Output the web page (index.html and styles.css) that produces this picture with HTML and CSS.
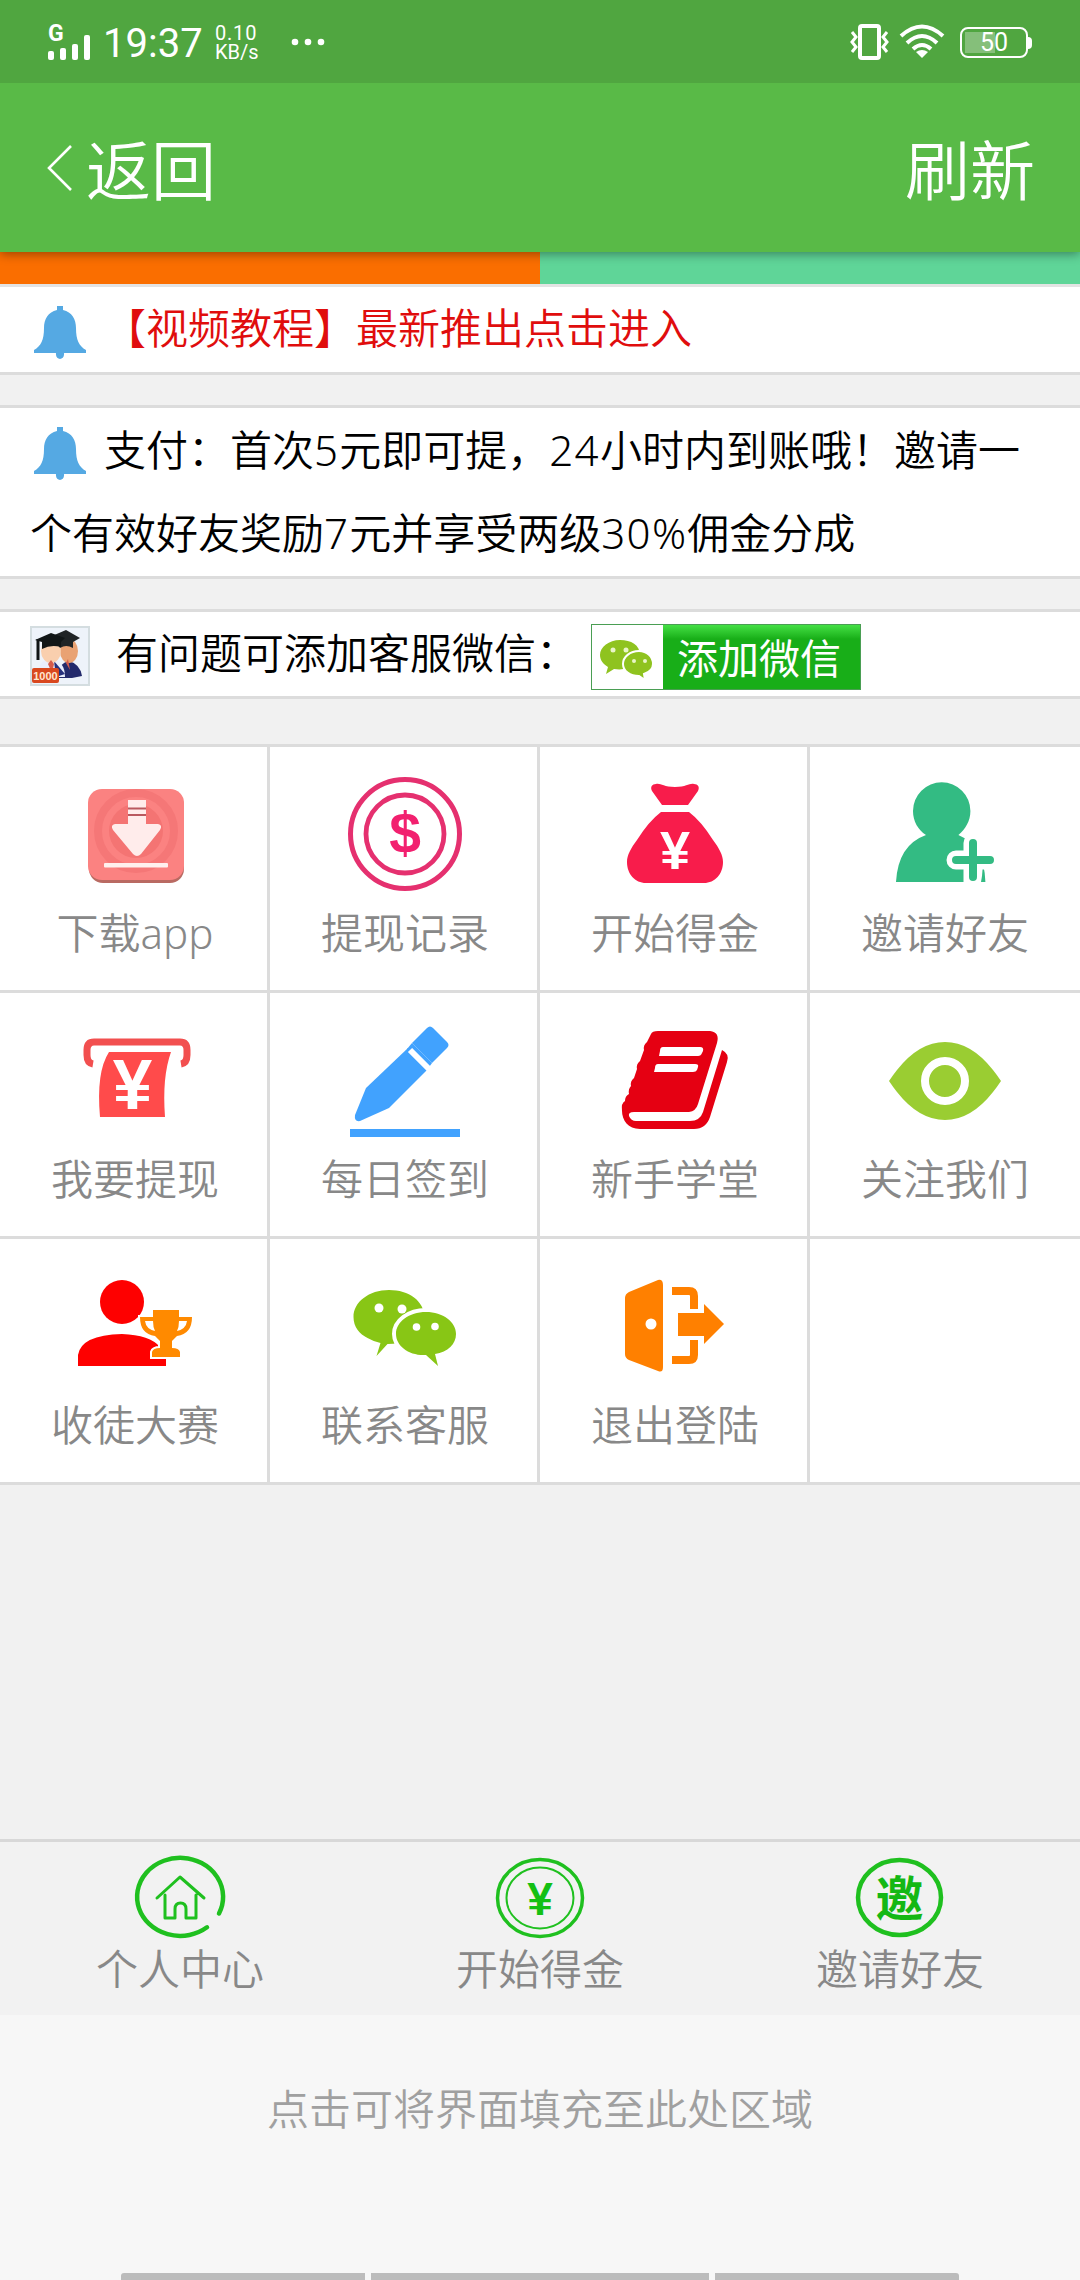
FILE: index.html
```html
<!DOCTYPE html>
<html lang="zh-CN">
<head>
    <meta charset="UTF-8">
    <meta name="viewport" content="width=device-width, initial-scale=1.0">
    <title>个人中心</title>
    <link rel="stylesheet" href="styles.css">
</head>
<body>
    <div class="status-bar">
        <div class="signal">
            <span class="network">G</span>
            <svg width="30" height="25" viewBox="0 0 30 25" fill="#fff">
                <rect x="0" y="16" width="6" height="9" rx="2"/>
                <rect x="12" y="13" width="6" height="12" rx="2"/>
                <rect x="24" y="9" width="6" height="16" rx="2"/>
                <rect x="36" y="0" width="6" height="25" rx="2"/>
            </svg>
        </div>
        <div class="time">19:37</div>
        <div class="speed"><span>0.10</span><span>KB/s</span></div>
        <svg class="dots" width="34" height="8" viewBox="0 0 34 8" fill="#fff">
            <circle cx="4" cy="4" r="3.3"/>
            <circle cx="17" cy="4" r="3.3"/>
            <circle cx="30" cy="4" r="3.3"/>
        </svg>
        <div class="status-right">
            <svg width="40" height="36" viewBox="0 0 40 36" fill="none" stroke="#fff">
                <rect x="10" y="2" width="19" height="32" rx="2" stroke-width="4"/>
                <path d="M2 8l4 5-4 5 4 5-4 5M37 8l-4 5 4 5-4 5 4 5" stroke-width="3"/>
            </svg>
            <svg width="46" height="36" viewBox="0 0 46 36" fill="none" stroke="#fff" stroke-width="4">
                <path d="M2 12Q23-7 44 12M8 19Q23 5 38 19M14 25Q23 17 32 25"/>
                <path d="M17 28q6-4 12 0l-6 6z" fill="#fff" stroke="none"/>
            </svg>
            <div class="battery"><span>50</span></div>
        </div>
    </div>

    <div class="header">
        <a class="back">
            <svg width="25" height="46" viewBox="0 0 25 46" fill="none" stroke="#fff" stroke-width="2.6">
                <path d="M24 1L2 23l22 22"/>
            </svg>
            <span>返回</span>
        </a>
        <a class="refresh">刷新</a>
    </div>
    <div class="tabs"><span></span><span></span></div>

    <div class="notice red">
        <svg class="bell" width="54" height="54" viewBox="0 0 54 54" fill="#55a9e3">
            <path d="M24 5V1h6v4c9 2 13 9 13 18 0 12 3 18 10 22v3H31c1 8-9 8-8 0H1v-3c7-4 10-10 10-22C11 14 15 7 24 5z"/>
        </svg>
        【视频教程】最新推出点击进入
    </div>

    <div class="notice pay">
        <svg class="bell" width="54" height="54" viewBox="0 0 54 54" fill="#55a9e3">
            <path d="M24 5V1h6v4c9 2 13 9 13 18 0 12 3 18 10 22v3H31c1 8-9 8-8 0H1v-3c7-4 10-10 10-22C11 14 15 7 24 5z"/>
        </svg>
        支付：首次<b>5</b>元即可提，<b>24</b>小时内到账哦！邀请一<br>个有效好友奖励<b>7</b>元并享受两级<b>30%</b>佣金分成
    </div>

    <div class="notice service">
        <svg class="avatar" width="60" height="60" viewBox="0 0 60 60">
            <rect x="1" y="1" width="58" height="58" fill="#eef3fa" stroke="#d4dde0" stroke-width="2"/>
            <path d="M26 52q3-15 13-17 11 3 13 15l-10 2z" fill="#232a6c"/>
            <path d="M9 43q1-9 12-11 14 3 14 19H11z" fill="#e9eefc"/>
            <path d="M24 35l11 13-9 3z" fill="#26307c"/>
            <ellipse cx="39" cy="25" rx="9" ry="12" fill="#e9a273"/>
            <ellipse cx="21" cy="25" rx="10" ry="12" fill="#f9cfae"/>
            <path d="M21 34l-3 4 4 9 2-9zM38 33l-2 4 4 7z" fill="#d55b4b"/>
            <path d="M22 10l14-6 14 8-7 4v6q-7-4-13 0z" fill="#202426"/>
            <path d="M5 14l16-7 14 5-4 4v5q-10-3-19 2v-7z" fill="#111617"/>
            <path d="M8 13v21" stroke="#111617" stroke-width="3"/>
            <rect x="2" y="42" width="27" height="15" rx="2" fill="#d9481f"/>
            <text class="badge-text" x="15.5" y="53.500" text-anchor="middle">1000</text>
        </svg>
        <span>有问题可添加客服微信：</span>
        <a class="add-wechat">
            <svg width="71" height="66" viewBox="0 0 71 66">
                <path d="M28 15c-11 0-20 7-20 15 0 5 3 9 8 12l-2 7 8-5c14 2 26-4 26-14S39 15 28 15z" fill="#8fc31f"/>
                <path d="M47 26c-9 0-16 6-16 13s7 12 16 12l6 4-1-6c6-2 9-6 9-10 0-7-6-13-14-13z" fill="#8fc31f" stroke="#fff" stroke-width="2"/>
                <g fill="#e9f5c8"><circle cx="21" cy="25" r="2.5"/><circle cx="34" cy="25" r="2.5"/><circle cx="42" cy="36" r="2"/><circle cx="53" cy="36" r="2"/></g>
            </svg>
            <span>添加微信</span>
        </a>
    </div>

    <div class="menu">
        <a class="item">
            <svg width="120" height="120" viewBox="0 0 120 120">
                <rect x="14" y="19" width="95" height="91" rx="14" fill="#b96a62"/>
                <rect x="13" y="16" width="96" height="91" rx="14" fill="#fb8281"/>
                <circle cx="61" cy="58" r="38" fill="none" stroke="#f57777" stroke-width="8"/>
                <circle cx="61" cy="58" r="27" fill="#f47473"/>
                <path d="M53 27h18v24h12q5 1 2 6L66 81q-4 4-8 0L38 57q-3-5 2-6h13z" fill="#ffeceb"/>
                <path d="M53 35.500h18M53 42h18" stroke="#b9595f" stroke-width="2"/>
                <rect x="29" y="90" width="64" height="4.500" rx="1" fill="#fff0ee"/>
            </svg>
            <p>下载app</p>
        </a>
        <a class="item">
            <svg width="120" height="120" viewBox="0 0 120 120" fill="none" stroke="#e5306f">
                <circle cx="60" cy="61" r="54.500" stroke-width="5"/>
                <circle cx="60" cy="61" r="39" stroke-width="4.800"/>
                <text class="sign" x="60" y="80" font-size="57" text-anchor="middle" fill="#f2206f" stroke="none">$</text>
            </svg>
            <p>提现记录</p>
        </a>
        <a class="item">
            <svg width="120" height="120" viewBox="0 0 120 120" fill="#f81c4b">
                <path d="M47 32L37 18c-2-4 0-7 4-7 5-1 7 3 19 3s14-4 19-3c4 0 6 3 4 7L73 32z"/>
                <path d="M46 39h28q12 9 24 28c6 8 10 15 10 22 0 12-8 21-19 21H31c-11 0-19-9-19-21 0-7 4-14 10-22q12-19 24-28z"/>
                <text class="sign" x="60" y="96" font-size="54" text-anchor="middle" fill="#fff">¥</text>
            </svg>
            <p>开始得金</p>
        </a>
        <a class="item">
            <svg width="120" height="120" viewBox="0 0 120 120" fill="#33bb83">
                <path d="M11 109q2-37 30-47c-8-5-13-14-13-24a28.700 28.700 0 0 1 57.400 0c0 10-5 18-12 24q26 11 27 47z"/>
                <path d="M88 70v40M71 87h38" fill="none" stroke="#fff" stroke-width="19" stroke-linecap="round"/>
                <path d="M98 97l2 12h-4z"/>
                <path d="M88 70v34M71 87h34" fill="none" stroke="#33bb83" stroke-width="8" stroke-linecap="round"/>
            </svg>
            <p>邀请好友</p>
        </a>

        <a class="item">
            <svg width="120" height="120" viewBox="0 0 120 120">
                <path d="M18 45q-6-1-6-9v-5q0-8 7-8h86q7 0 7 8v5q0 8-6 9" fill="none" stroke="#f24f4f" stroke-width="7"/>
                <path d="M34 33h62q-9 25-6 65H25q-4-45 9-65z" fill="#ff4b4b"/>
                <text class="sign" x="57.500" y="90" font-size="71" text-anchor="middle" fill="#fff">¥</text>
            </svg>
            <p>我要提现</p>
        </a>
        <a class="item">
            <svg width="120" height="120" viewBox="0 0 120 120" fill="#41a2fe">
                <path d="M82 9q3-3 6 0l14 14q3 3 0 6L87 44 67 24z"/>
                <path d="M63 29l19 22-38 38-29 13q-6 1-5-6l11-27z"/>
                <path d="M82 51l5-7-20-20-5 6z"/>
                <path d="M65 31L84 50" stroke="#fff" stroke-width="6"/>
                <rect x="5" y="110" width="110" height="8"/>
            </svg>
            <p>每日签到</p>
        </a>
        <a class="item">
            <svg width="120" height="120" viewBox="0 0 120 120" fill="#e50012">
                <path d="M43 12h52q10 1 7 12L83 85q-2 7-9 8H19q-6 0-5 4 2 5 7 5h54q10 0 13-9l19-62q8 4 5 12L95 98q-4 12-16 12H25C13 110 7 101 7 92q-1-8 3-10 0-5 4-7-1-5 2-8-1-5 3-8l3-9q-1-5 3-8l4-11q-1-5 3-8l4-8q1-3 7-3z"/>
                <path d="M48 28h37q4 0 3 4l-1 2q-1 3-4 3H44l1-5q0-4 3-4zM43 45h37q4 0 3 3l-1 3q-1 2-4 2H39l1-4q0-4 3-4z" fill="#fff"/>
            </svg>
            <p>新手学堂</p>
        </a>
        <a class="item">
            <svg width="120" height="120" viewBox="0 0 120 120">
                <path d="M4 62q4-6 8-11 22-28 48-28t48 28q4 5 8 11-4 6-8 11-22 28-48 28T12 73q-4-5-8-11z" fill="#9acd32"/>
                <circle cx="60" cy="62" r="20" fill="none" stroke="#fff" stroke-width="8"/>
            </svg>
            <p>关注我们</p>
        </a>

        <a class="item">
            <svg width="120" height="120" viewBox="0 0 120 120">
                <circle cx="47" cy="37" r="22" fill="#fe0000"/>
                <path d="M3 101V90q3-20 44-21 28 1 38 13v12h6v7z" fill="#fe0000"/>
                <g fill="#ff8a00" stroke="#fff" stroke-width="4" paint-order="stroke">
                    <path d="M78 45h26v7h13q0 17-15 19-4 4-5 5v7q7 0 8 4v5H77v-5q1-4 8-4v-7l-5-5Q65 69 65 52h13z"/>
                </g>
                <path d="M70 56h8q0 6 2 10-9-2-10-10zM112 56h-8q0 6-2 10 9-2 10-10z" fill="#fff"/>
            </svg>
            <p>收徒大赛</p>
        </a>
        <a class="item">
            <svg width="120" height="120" viewBox="0 0 120 120">
                <path d="M44 25c-20 0-35.500 12-35.500 27 0 10 6 17 14 21q7 4 13 5l-4 13 11-12q24 0 32-11 5-7 5-16C79 36 64 25 44 25z" fill="#88c615"/>
                <path d="M81 47c-17 0-30 10-30 22s13 22 30 21l12 11-3-12c13-2 21-10 21-20 0-12-13-22-30-22z" fill="#88c615" stroke="#fff" stroke-width="8" paint-order="stroke"/>
                <g fill="#fff"><circle cx="34" cy="43" r="4.500"/><circle cx="57" cy="44" r="4.500"/><circle cx="71.500" cy="62" r="3.800"/><circle cx="90" cy="61.500" r="3.800"/></g>
            </svg>
            <p>联系客服</p>
        </a>
        <a class="item">
            <svg width="120" height="120" viewBox="0 0 120 120" fill="#ff8000">
                <path d="M14 27l29-12q5-1 5 5v82q0 6-5 4L14 95q-4-2-4-6V33q0-4 4-6z"/>
                <circle cx="36" cy="59" r="5.500" fill="#fff"/>
                <path d="M57 26h17q5 0 5 5v13M57 95h17q5 0 5-5V75" fill="none" stroke="#ff8000" stroke-width="8"/>
                <path d="M63 48h26v-9l20 20-20 20v-8H63z"/>
            </svg>
            <p>退出登陆</p>
        </a>
        <a class="item"></a>
    </div>

    <div class="footer">
        <a class="nav">
            <svg width="96" height="90" viewBox="0 0 96 90" fill="none" stroke="#1fc01f">
                <path d="M75 75.300A43 39 0 1 1 87 61.500" stroke-width="4.500" stroke-linecap="round"/>
                <path d="M25 46l23-21 24 21M33 43v23h10V57q0-6 5.500-6t5.500 6v9h10V43" stroke-width="3" stroke-linejoin="round" stroke-linecap="round"/>
            </svg>
            <p>个人中心</p>
        </a>
        <a class="nav">
            <svg width="96" height="90" viewBox="0 0 96 90" fill="none" stroke="#1fc01f">
                <ellipse cx="48" cy="46" rx="42.500" ry="38.500" stroke-width="3.500"/>
                <ellipse cx="48" cy="46" rx="33.500" ry="30.500" stroke-width="2"/>
                <text class="sign" x="48" y="63" font-size="46" text-anchor="middle" fill="#14c014" stroke="none">¥</text>
            </svg>
            <p>开始得金</p>
        </a>
        <a class="nav">
            <svg width="96" height="90" viewBox="0 0 96 90" fill="none" stroke="#1fc01f">
                <ellipse cx="47.500" cy="45.500" rx="41.500" ry="37.500" stroke-width="4.500"/>
                <text class="invite" x="47.500" y="64" text-anchor="middle" fill="#14b814" stroke="none">邀</text>
            </svg>
            <p>邀请好友</p>
        </a>
    </div>

    <div class="fill-tip">点击可将界面填充至此处区域</div>
    <div class="gesture"><span></span><span></span><span></span></div>
</body>
</html>
```
FILE: styles.css
```css
* {
    box-sizing: border-box;
}
body {
    margin: 0;
    height: 2280px;
    display: flex;
    flex-direction: column;
    font-family: "Noto Sans", "Noto Sans CJK SC", sans-serif;
    font-weight: 350;
    font-size: 42px;
    background-color: #f1f1f1;
    overflow: hidden;
}
svg {
    display: block;
    flex: none;
}
p {
    margin: 0;
}

/* status bar */
.status-bar {
    position: relative;
    z-index: 1;
    height: 83px;
    padding: 1px 48px 0;
    display: flex;
    align-items: center;
    background: #50a640;
    color: #fff;
    font-family: Roboto, sans-serif;
    font-weight: 400;
}
.signal {
    width: 43px;
    height: 35px;
    display: grid;
    color: #fff;
}
.signal > * {
    grid-area: 1 / 1;
}
.signal svg {
    align-self: end;
    overflow: visible;
}
.network {
    font-size: 23px;
    line-height: 17px;
    font-weight: 700;
}
.time {
    width: 99px;
    margin-left: 12px;
    padding-top: 4px;
    font-size: 40px;
    line-height: 44px;
}
.speed {
    margin-left: 13px;
    width: 76px;
    display: flex;
    flex-direction: column;
    padding-top: 2px;
    font-size: 20px;
    line-height: 19px;
}
.speed span:first-child {
    letter-spacing: 0.8px;
}
.status-right {
    margin-left: auto;
    display: flex;
    align-items: center;
    gap: 9px;
}
.battery {
    position: relative;
    width: 68px;
    height: 31px;
    margin: 0 4px 0 6px;
    border: 2px solid #fff;
    border-radius: 8px;
    background: linear-gradient(#85bf7a, #85bf7a) 3px 3px / 30px 21px no-repeat;
    font-size: 25px;
    line-height: 28px;
    text-align: center;
}
.battery::after {
    content: "";
    position: absolute;
    right: -6px;
    top: 8px;
    width: 4px;
    height: 12px;
    border-radius: 0 4px 4px 0;
    background: #fff;
}

/* title bar */
.header {
    position: relative;
    height: 169px;
    padding: 0 45px 0 47px;
    display: flex;
    justify-content: space-between;
    align-items: center;
    background: #59ba47;
    color: #fff;
    font-size: 65px;
    line-height: 80px;
    box-shadow: 0 2px 10px rgba(0, 0, 0, 0.4);
}
.back {
    display: flex;
    align-items: center;
    gap: 14px;
}
.back span, .refresh {
    padding-top: 4px;
}
.tabs {
    display: flex;
    height: 35px;
    border-bottom: 3px solid #e3e3e3;
}
.tabs span {
    flex: 1;
    background: #fa6e00;
}
.tabs span + span {
    background: #5fd598;
}

/* notices */
.notice {
    height: 90px;
    padding: 0 30px;
    margin-bottom: 30px;
    background: #fff;
    border-top: 3px solid #dcdcdc;
    border-bottom: 3px solid #dcdcdc;
    line-height: 80px;
    color: #000;
    white-space: nowrap;
}
.red {
    border-top: none;
    height: 88px;
    line-height: 82px;
    color: #e00d0d;
}
.pay {
    height: 174px;
    line-height: 84px;
}
.notice b {
    font-weight: 350;
    letter-spacing: 1.3px;
}
.bell {
    float: left;
    margin: 18px 17px 0 3px;
}
.pay {
    padding-bottom: 3px;
    line-height: 83px;
}
.service {
    display: flex;
    align-items: center;
    margin-bottom: 45px;
}
.avatar {
    margin-top: 4px;
}
.service > span {
    margin-left: 26px;
    margin-top: -3px;
    width: 475px;
}
.badge-text {
    font: 700 11px "Liberation Sans", sans-serif;
    fill: #ffe6d0;
}
.add-wechat {
    display: flex;
    width: 270px;
    height: 66px;
    margin-top: 6px;
    border: 1px solid #4a9e53;
    background: #fff;
}
.add-wechat span {
    flex: 1;
    padding-left: 14px;
    background: linear-gradient(#45e045, #18ae18 22%, #18ae18);
    color: #fff;
    font-size: 41px;
    font-weight: 400;
    line-height: 66px;
}

/* menu grid */
.menu {
    display: grid;
    grid-template-columns: repeat(4, 270px);
    grid-auto-rows: 246px;
    border-top: 3px solid #dcdcdc;
}
.item {
    padding-top: 26px;
    display: flex;
    flex-direction: column;
    align-items: center;
    background: #fff;
    border-bottom: 3px solid #dcdcdc;
    box-shadow: inset -3px 0 #dcdcdc;
    color: #888;
}
.item:nth-child(4n) {
    box-shadow: none;
}
.item p {
    margin-top: 10px;
    line-height: 60px;
}
.sign {
    font-family: "Liberation Sans", Arial, sans-serif;
    font-weight: 700;
}

/* bottom navigation */
.footer {
    display: flex;
    height: 176px;
    margin-top: auto;
    padding-top: 10px;
    border-top: 3px solid #d8d8d8;
    background: #f2f2f2;
    color: #888;
}
.nav {
    flex: 1;
    display: flex;
    flex-direction: column;
    align-items: center;
    line-height: 54px;
}
.invite {
    font: 700 48px "Noto Sans CJK SC", sans-serif;
}
.fill-tip {
    height: 258px;
    padding-top: 64px;
    background: #f7f7f7;
    color: #a0a0a0;
    line-height: 60px;
    text-align: center;
}
.gesture {
    display: flex;
    gap: 6px;
    height: 7px;
    padding: 0 121px;
    background: #f7f7f7;
}
.gesture span {
    width: 244px;
    background: #bcbcbc;
    border-radius: 3px 0 0 0;
}
.gesture span:nth-child(2) {
    width: 338px;
    border-radius: 0;
}
.gesture span:last-child {
    border-radius: 0 3px 0 0;
}
```
